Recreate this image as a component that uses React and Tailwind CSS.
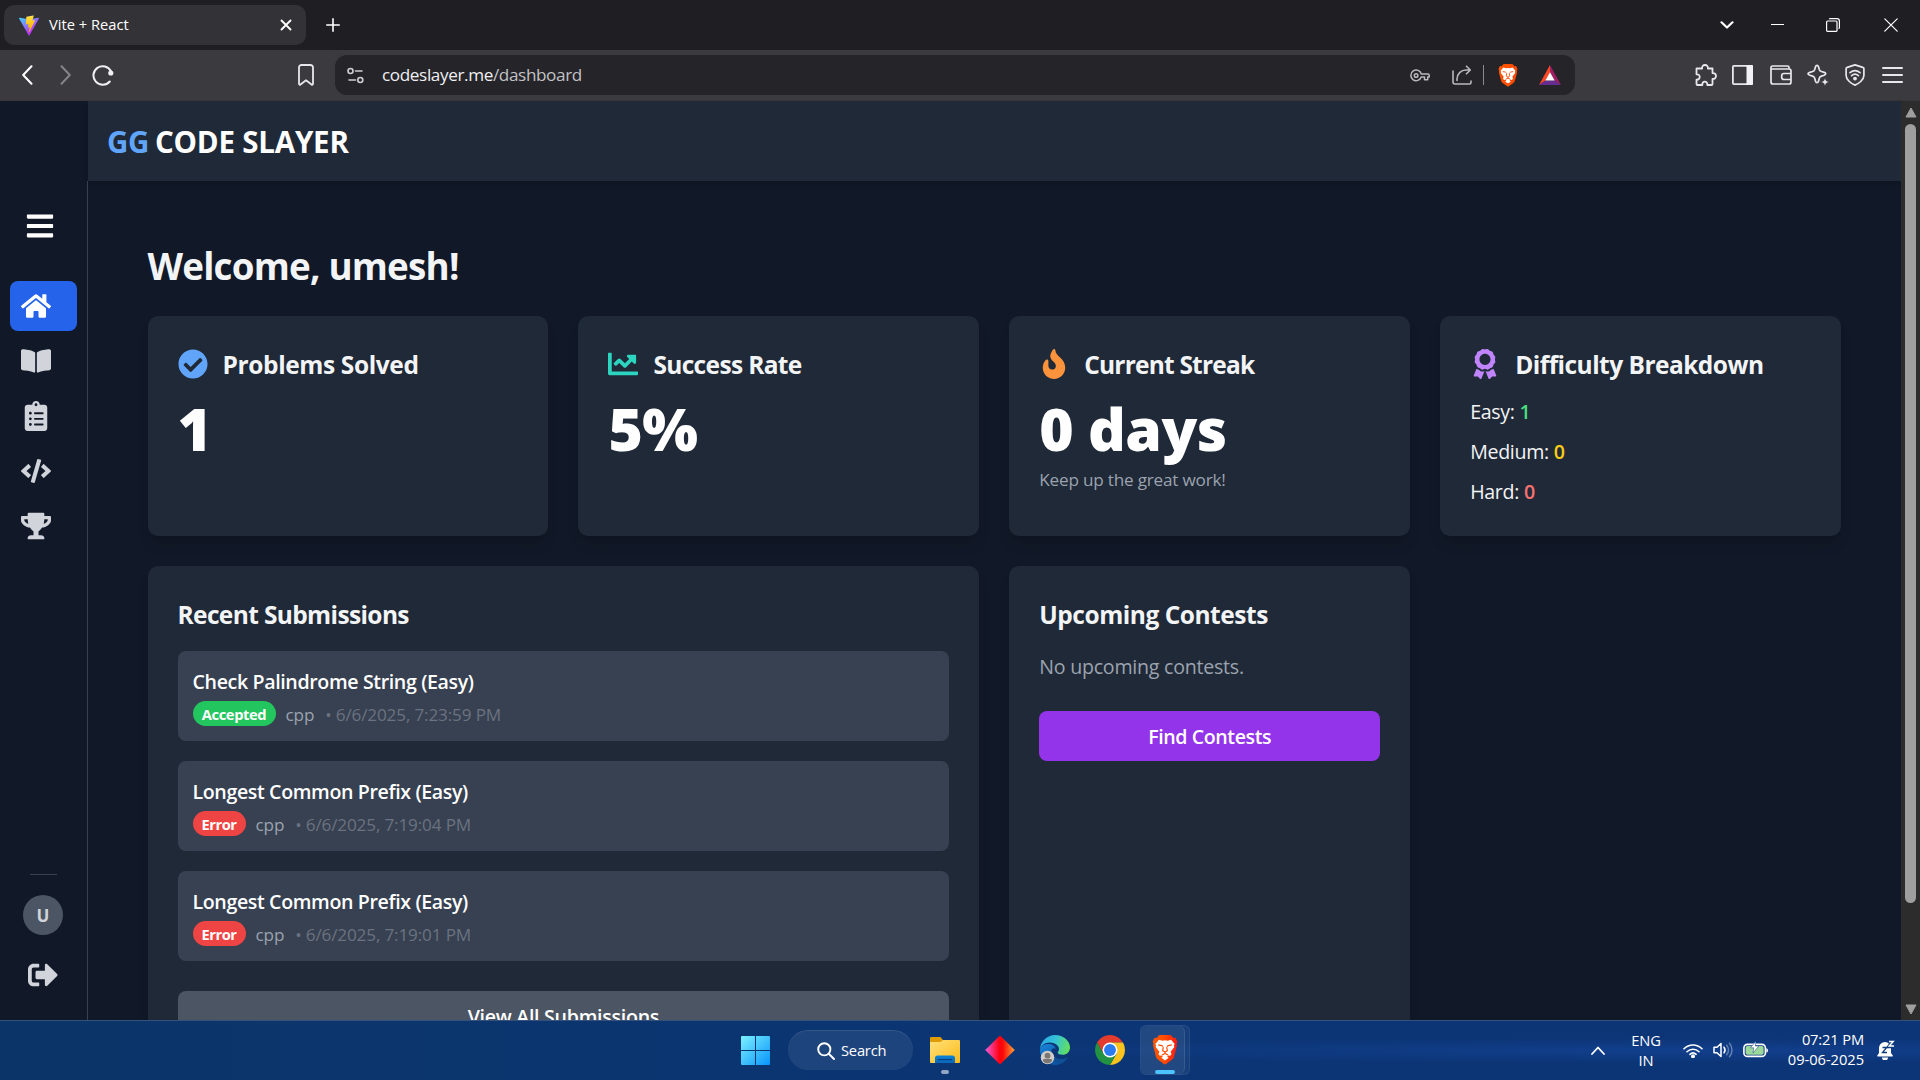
import React from "react";
import {
  FaBars,
  FaHome,
  FaBookOpen,
  FaClipboardList,
  FaCode,
  FaTrophy,
  FaSignOutAlt,
  FaCheckCircle,
  FaChartLine,
  FaFire,
  FaAward,
} from "react-icons/fa";

/* ---------- logos and browser icons ---------- */

function ViteLogo() {
  return (
    <svg viewBox="0 0 256 257" className="h-[21px] w-5">
      <defs>
        <linearGradient id="viteA" x1="0" x2="0.6" y1="0.05" y2="0.8">
          <stop offset="0" stopColor="#41d1ff" />
          <stop offset="1" stopColor="#bd34fe" />
        </linearGradient>
        <linearGradient id="viteB" x1="0.43" x2="0.5" y1="0.02" y2="0.9">
          <stop offset="0" stopColor="#ffea83" />
          <stop offset="0.1" stopColor="#ffdd35" />
          <stop offset="1" stopColor="#ffa800" />
        </linearGradient>
      </defs>
      <path fill="url(#viteA)" d="M255.153 37.938 134.897 252.976c-2.483 4.44-8.862 4.466-11.382.048L.875 37.958c-2.746-4.814 1.371-10.646 6.827-9.67l120.385 21.517a6.537 6.537 0 0 0 2.322-.004l117.867-21.483c5.438-.991 9.574 4.796 6.877 9.62Z" />
      <path fill="url(#viteB)" d="M185.432.063 96.44 17.501a3.268 3.268 0 0 0-2.634 3.014l-5.474 92.456a3.268 3.268 0 0 0 3.997 3.378l24.777-5.718c2.318-.535 4.413 1.507 3.936 3.838l-7.361 36.047c-.495 2.426 1.782 4.5 4.151 3.78l15.304-4.649c2.372-.72 4.652 1.36 4.15 3.788l-11.698 56.621c-.732 3.542 3.979 5.473 5.943 2.437l1.313-2.028 72.516-144.72c1.215-2.423-.88-5.186-3.54-4.672l-25.505 4.922c-2.396.462-4.435-1.77-3.759-4.114l16.646-57.705c.677-2.35-1.37-4.583-3.769-4.113Z" />
    </svg>
  );
}

function BraveLogo({ className, id }) {
  return (
    <svg viewBox="0 0 20 23" className={className}>
      <defs>
        <linearGradient id={id} x1="0" x2="1" y1="0" y2="0">
          <stop offset="0" stopColor="#ff5500" />
          <stop offset="0.4" stopColor="#ff5000" />
          <stop offset="1" stopColor={id === "braveTask" ? "#ff1a10" : "#ff4600"} />
        </linearGradient>
      </defs>
      <path fill={`url(#${id})`} d="M5.6 0h8.8l2.1 2.2 1.6-.2 1.4 3-.6 1.9.3 1-2.2 8.6c-.3 1.2-1 2-2 2.7l-4.2 3c-.5.4-1.1.4-1.6 0l-4.2-3c-1-.7-1.7-1.5-2-2.7L.8 7.9l.3-1L.5 5l1.4-3 1.6.2z" />
      <path fill="#fff" d="M5.3 3.6 8 4.3 10 4l2 .3 2.7-.7 2.7 3.2-.6 1.2.4 1.1-2.9 3.7.7 1.7-1 1.5-1.7-.3-.6.8 1.1 1L10 19.500l-2.800-2 1.100-1-.6-.8-1.700.3-1-1.500.7-1.700L2.800 9.100 3.200 8l-.6-1.200z" />
      <path fill="none" stroke="#ff4a00" strokeWidth=".9" strokeLinejoin="round" d="M4.800 7.600l2.700.5 1 .8M15.200 7.600l-2.700.5-1 .8M8.700 9.300l-.5 2.700 1.800 1.100 1.800-1.100-.5-2.700M10 13.100v1.200M7.600 15.300 10 14.200l2.400 1.100" />
    </svg>
  );
}

function BatLogo() {
  return (
    <svg viewBox="0 0 22 20" className="h-5 w-[22px]">
      <path fill="#ff4724" d="M11 0v7.500L6.500 15.500 0 20z" />
      <path fill="#9e1f63" d="M11 0l11 20-6.500-4.500L11 7.500z" />
      <path fill="#662d91" d="M0 20l6.500-4.500h9L22 20z" />
      <path fill="#fff" d="M11 7.300l4.700 8.300H6.300z" />
    </svg>
  );
}

function Line({ box = "0 0 24 24", className, sw = 2, children }) {
  return (
    <svg viewBox={box} className={className} fill="none" stroke="currentColor" strokeWidth={sw} strokeLinecap="round" strokeLinejoin="round">
      {children}
    </svg>
  );
}

function TabStrip() {
  return (
    <div className="flex h-[50px] items-start bg-[#1f1e23] pl-1 pt-[5px] text-white">
      <div className="flex h-[40px] w-[302px] items-center rounded-[10px] bg-[#333236] pl-[15px] pr-[14px]">
        <ViteLogo />
        <span className="ml-[10px] flex-1 pb-0.5 text-[14.7px] leading-5">Vite + React</span>
        <Line box="0 0 12 12" className="size-3" sw={1.9}>
          <path d="M1.5 1.5l9 9M10.5 1.5l-9 9" />
        </Line>
      </div>
      <Line box="0 0 14 14" className="ml-5 mt-[13px] size-[14px]" sw={1.6}>
        <path d="M7 .8v12.4M.8 7h12.4" />
      </Line>
      <div className="ml-auto flex h-10 items-center pr-[22px]">
        <Line box="0 0 14 8" className="mr-[37px] h-2 w-[14px]" sw={2.2}>
          <path d="M1.5 1.3L7 6.500l5.500-5.200" />
        </Line>
        <div className="mb-px mr-[42px] h-px w-[13px] bg-white" />
        <svg viewBox="0 0 14 14" className="mr-[44px] size-[14px]" fill="none" stroke="#fff" strokeWidth="1.2">
          <rect x=".6" y="3" width="10.4" height="10.4" rx="1" />
          <path d="M3.200 1.200A1.500 1.500 0 0 1 4.500.6H11A2.400 2.400 0 0 1 13.400 3v6.500a1.500 1.500 0 0 1-.8 1.300" />
        </svg>
        <Line box="0 0 14 14" className="size-[14px]" sw={1.2}>
          <path d="M.8.8l12.4 12.4M13.2.8L.8 13.2" />
        </Line>
      </div>
    </div>
  );
}

function Toolbar() {
  return (
    <div className="flex h-[51px] items-center border-b border-[#37353a] bg-[#3b3a3f] text-[#e8e8ea]">
      <div className="flex w-[335px] items-center pl-[22px]">
        <Line box="0 0 11 20" className="h-5 w-[11px] text-white" sw={2}>
          <path d="M9.500 1.200L1.200 10l8.300 8.800" />
        </Line>
        <Line box="0 0 11 20" className="ml-[27px] h-5 w-[11px] text-[#858488]" sw={2}>
          <path d="M1.500 1.200L9.800 10l-8.300 8.800" />
        </Line>
        <svg viewBox="0 0 22 22" className="ml-[21px] size-[22px]">
          <path fill="none" stroke="#f0f0f2" strokeWidth="2" strokeLinecap="round" d="M17.800 17.500A9.300 9.300 0 1 1 19 7.200" />
          <circle cx="18.800" cy="9" r="2.600" fill="#f0f0f2" />
        </svg>
        <Line box="0 0 16 22" className="ml-[184px] h-[22px] w-4" sw={1.8}>
          <path d="M3.500 1h9A2.500 2.500 0 0 1 15 3.500v16.300c0 1-.8 1.300-1.500.7L8 16.300l-5.500 4.200c-.7.6-1.500.3-1.500-.7V3.500A2.500 2.500 0 0 1 3.500 1z" />
        </Line>
      </div>
      <div className="flex h-10 w-[1240px] items-center rounded-xl bg-[#252429] pl-3 pr-[14px]">
        <Line box="0 0 17 17" className="size-[17px] text-[#d0d0d3]" sw={1.6}>
          <circle cx="3.500" cy="4" r="2.500" />
          <path d="M8.500 4H15M2 13h6.500" />
          <circle cx="13.300" cy="13" r="2.500" />
        </Line>
        <span className="ml-[18px] text-[17.15px] leading-6 tracking-[-0.38px] text-[#c2c2c5]">
          <span className="text-[#f0f0f2]">codeslayer.me</span>/dashboard
        </span>
        <Line box="0 0 20 13" className="ml-auto h-[13px] w-5 text-[#b9b9bc]" sw={1.5}>
          <path d="M11.300 5H18a1.200 1.200 0 0 1 1.200 1.200V8h-1.500v2.800h-3.200V8h-3.300a5.300 5.300 0 1 1 .1-3z" />
          <circle cx="6.100" cy="6.500" r="1.800" />
        </Line>
        <Line box="0 0 20 20" className="ml-[22px] size-5 text-[#b9b9bc]" sw={1.6}>
          <path d="M1 6v11a2 2 0 0 0 2 2h14.500a1.500 1.500 0 0 0 1.500-1.500V16M5 15.500V14c0-5 4-9 9-9h4M14.500 1.200L18.300 5l-3.800 3.800" />
        </Line>
        <div className="ml-[11px] h-5 w-px bg-[#8b8a8e]" />
        <BraveLogo id="braveBar" className="ml-[14px] h-[23px] w-5" />
        <div className="ml-[21px]">
          <BatLogo />
        </div>
      </div>
      <div className="ml-auto flex items-center pr-[17px]">
        <Line box="0 0 22 22" className="size-[22px]" sw={1.8}>
          <path d="M1.500 4.500h5.600c-.3-2 .9-3.500 2.900-3.500s3.200 1.500 2.900 3.500h4.600v4.600c2.200-.2 3.500 1.100 3.500 2.900s-1.300 3.100-3.500 2.900V20a1 1 0 0 1-1 1h-4.200c.2-2-.8-3.300-2.500-3.300S7.100 19 7.300 21H2.500a1 1 0 0 1-1-1v-4.300c2 .1 3.200-.9 3.200-2.700S3.500 10.100 1.500 10.300z" />
        </Line>
        <svg viewBox="0 0 21 20" className="ml-[15px] h-5 w-[21px]">
          <rect x=".9" y=".9" width="19.200" height="18.200" rx="1" fill="none" stroke="currentColor" strokeWidth="1.8" />
          <path d="M14.500 0H20a1 1 0 0 1 1 1v18a1 1 0 0 1-1 1h-5.500z" fill="#f2f2f4" />
        </svg>
        <Line box="0 0 22 20" className="ml-[17px] h-5 w-[22px]" sw={1.7}>
          <path d="M19 4V2.500A1.500 1.500 0 0 0 17.500 1H2.800A1.600 1.600 0 0 0 1 2.600V17a2 2 0 0 0 2 2h16a2 2 0 0 0 2-2V6a2 2 0 0 0-2-2H2.500M21 8.500h-7a2.300 2.300 0 0 0-2.300 2.300v1.400a2.300 2.300 0 0 0 2.300 2.300h7" />
        </Line>
        <svg viewBox="0 0 22 22" className="ml-[15px] size-[22px]">
          <path fill="none" stroke="currentColor" strokeWidth="1.7" strokeLinejoin="round" d="M10 1.300c.8 0 1.200.6 1.500 1.500l.8 2.600c.4 1.200.9 1.700 2.100 2.100l2.800.9c1 .3 1.500.7 1.500 1.400s-.5 1.100-1.500 1.400l-2.800.9c-1.200.4-1.700.9-2.100 2.100l-.8 3c-.3.9-.7 1.400-1.500 1.400s-1.200-.5-1.500-1.400l-.8-3c-.4-1.200-.9-1.700-2.100-2.100l-2.800-.9C1.800 10.900 1 10.500 1 9.800s.8-1.100 1.800-1.400l2.800-.9c1.200-.4 1.700-.9 2.100-2.100l.8-2.600c.3-.9.7-1.500 1.500-1.500z" />
          <path fill="currentColor" stroke="#3b3a3f" strokeWidth=".8" d="M18 13.500l1.300 3.200 3.200 1.300-3.200 1.300L18 22.500l-1.300-3.200-3.200-1.300 3.200-1.300z" />
        </svg>
        <Line box="0 0 20 22" className="ml-4 h-[22px] w-5" sw={1.7}>
          <path d="M10 .9l7.800 2.500c.7.2 1.100.7 1.100 1.400v6.700c0 4.500-5.500 8.300-8.900 9.600-3.400-1.300-8.900-5.100-8.900-9.600V4.800c0-.7.4-1.200 1.100-1.400z" />
          <path d="M5 8.600c3-2.500 7-2.500 10 0M6.600 11.600c2-1.700 4.800-1.700 6.800 0" />
          <circle cx="10" cy="14.600" r="1.100" fill="currentColor" />
        </Line>
        <div className="ml-[17px] flex w-[21px] flex-col gap-[5px] text-[#e8e8ea]">
          <div className="h-0.5 rounded bg-current" />
          <div className="h-0.5 rounded bg-current" />
          <div className="h-0.5 rounded bg-current" />
        </div>
      </div>
    </div>
  );
}

/* ---------- page ---------- */

const NAV = [FaHome, FaBookOpen, FaClipboardList, FaCode, FaTrophy];

function Sidebar() {
  return (
    <aside className="flex w-[88px] shrink-0 flex-col pt-20">
      <div className="flex flex-1 flex-col border-r border-[#374151] pt-[30px] text-[#d1d5db]">
        <FaBars className="ml-[25px] size-[30px] text-white" />
        <nav className="mt-10 flex flex-col gap-[5px] px-[10px]">
          {NAV.map((Icon, i) => (
            <a key={i} className={i === 0 ? "flex h-[50px] items-center rounded-lg bg-[#2563eb] pl-[11px] text-white" : "flex h-[50px] items-center pl-[11px]"}>
              <Icon className="size-[30px]" />
            </a>
          ))}
        </nav>
        <div className="mt-auto flex flex-col items-center pb-[30px] pr-px">
          <div className="h-px w-[27px] bg-[#374151]" />
          <div className="mt-5 flex size-10 items-center justify-center rounded-full bg-[#4b5563] pt-0.5 text-[17px] font-bold">U</div>
          <FaSignOutAlt className="mt-[25px] size-[30px]" />
        </div>
      </div>
    </aside>
  );
}

function Card({ className = "", children }) {
  return <section className={`rounded-[10px] bg-[#1f2937] p-[30px] shadow-lg ${className}`}>{children}</section>;
}

function StatTitle({ icon: Icon, color, tracking, children }) {
  return (
    <h2 className={`mb-[15px] flex h-[35px] items-center text-[24.5px] font-bold leading-[35px] text-[#f3f4f6] ${tracking}`}>
      <Icon className={`mr-[15px] size-[30px] ${color}`} />
      <span className="pt-px">{children}</span>
    </h2>
  );
}

function Big({ children }) {
  return <p className="h-[60px] pt-0.5 text-[58.8px] font-extrabold leading-[60px] tracking-[-0.5px] text-white">{children}</p>;
}

const LEVELS = [
  ["Easy:", "1", "text-[#4ade80]"],
  ["Medium:", "0", "text-[#facc15]"],
  ["Hard:", "0", "text-[#f87171]"],
];

const SUBMISSIONS = [
  ["Check Palindrome String (Easy)", "Accepted", "6/6/2025, 7:23:59 PM"],
  ["Longest Common Prefix (Easy)", "Error", "6/6/2025, 7:19:04 PM"],
  ["Longest Common Prefix (Easy)", "Error", "6/6/2025, 7:19:01 PM"],
];

function Submission({ title, status, date }) {
  return (
    <li className="h-[90px] rounded-lg bg-[#374151] p-[15px]">
      <p className="h-[30px] pt-px text-[19.6px] font-semibold leading-[30px] tracking-[-0.37px] text-white">{title}</p>
      <div className="mt-[5px] flex h-[25px] items-center text-[17.15px] tracking-[-0.16px]">
        {status === "Accepted" ? (
          <span className="flex h-[25px] w-[83px] items-center justify-center rounded-full bg-[#22c55e] pt-0.5 text-[14.7px] font-bold tracking-[-0.4px] text-white">{status}</span>
        ) : (
          <span className="flex h-[25px] w-[53px] items-center justify-center rounded-full bg-[#ef4444] pt-0.5 text-[14.7px] font-bold tracking-[-0.5px] text-white">{status}</span>
        )}
        <span className="ml-[10px] pt-[3px] text-[#9ca3af]">cpp</span>
        <span className="ml-[11px] pt-[3px] text-[#6b7280]">• {date}</span>
      </div>
    </li>
  );
}

function Dashboard() {
  return (
    <main className="flex-1 p-[60px] pl-[59.5px]">
      <h1 className="mb-[27px] pt-[3px] text-[36.75px] font-bold leading-[45px] tracking-[-0.78px] text-[#f3f4f6]">Welcome, umesh!</h1>
      <div className="grid grid-cols-4 gap-[30px]">
        <Card>
          <StatTitle icon={FaCheckCircle} color="text-[#60a5fa]" tracking="tracking-[-0.38px]">Problems Solved</StatTitle>
          <Big>1</Big>
        </Card>
        <Card>
          <StatTitle icon={FaChartLine} color="text-[#2dd4bf]" tracking="tracking-[-0.65px]">Success Rate</StatTitle>
          <Big>5%</Big>
        </Card>
        <Card>
          <StatTitle icon={FaFire} color="text-[#fb923c]" tracking="tracking-[-0.8px]">Current Streak</StatTitle>
          <Big>0 days</Big>
          <p className="mt-[10px] pt-px text-[17.15px] leading-[25px] tracking-[-0.2px] text-[#9ca3af]">Keep up the great work!</p>
        </Card>
        <Card>
          <StatTitle icon={FaAward} color="text-[#c084fc]" tracking="tracking-[-0.53px]">Difficulty Breakdown</StatTitle>
          <ul className="flex flex-col gap-[10px] text-[19.6px] leading-[30px] tracking-[-0.3px] text-[#f3f4f6]">
            {LEVELS.map(([label, n, color]) => (
              <li key={label} className="h-[30px] pt-px">
                {label} <span className={`font-semibold ${color}`}>{n}</span>
              </li>
            ))}
          </ul>
        </Card>
        <Card className="col-span-2">
          <h2 className="mb-5 h-[35px] pt-px text-[24.5px] font-bold leading-[35px] tracking-[-0.63px] text-[#f3f4f6]">Recent Submissions</h2>
          <ul className="flex flex-col gap-5">
            {SUBMISSIONS.map(([t, s, d]) => (
              <Submission key={d} title={t} status={s} date={d} />
            ))}
          </ul>
          <button className="mt-[30px] h-[50px] w-full rounded-lg bg-[#4b5563] pt-0.5 text-[19.6px] font-semibold tracking-[-0.28px] text-white">View All Submissions</button>
        </Card>
        <Card>
          <h2 className="mb-5 h-[35px] pt-px text-[24.5px] font-bold leading-[35px] tracking-[-0.47px] text-[#f3f4f6]">Upcoming Contests</h2>
          <p className="mb-[30px] h-[30px] pt-px text-[19.6px] leading-[30px] tracking-[-0.24px] text-[#9ca3af]">No upcoming contests.</p>
          <button className="h-[50px] w-full rounded-lg bg-[#9333ea] pt-px text-[19.6px] font-semibold tracking-[-0.42px] text-white">Find Contests</button>
        </Card>
      </div>
    </main>
  );
}

function Scrollbar() {
  return (
    <div className="flex w-[19px] shrink-0 flex-col items-center bg-[#2c2c2c] pb-[5px] pt-[6px]">
      <svg viewBox="0 0 12 11" className="h-[11px] w-3">
        <path fill="#9f9f9f" stroke="#9f9f9f" strokeWidth="1" strokeLinejoin="round" d="M6 1l5 9H1z" />
      </svg>
      <div className="mt-[6px] h-[779px] w-[11px] rounded-full bg-[#9f9f9f]" />
      <svg viewBox="0 0 12 11" className="mt-auto h-[11px] w-3">
        <path fill="#9f9f9f" stroke="#9f9f9f" strokeWidth="1" strokeLinejoin="round" d="M6 10l5-9H1z" />
      </svg>
    </div>
  );
}

/* ---------- Windows taskbar ---------- */

function StartLogo() {
  return (
    <svg viewBox="0 0 29 29" className="size-[29px]">
      <defs>
        <linearGradient id="win" gradientUnits="userSpaceOnUse" x1="0" y1="0" x2="29" y2="29">
          <stop offset="0" stopColor="#7cf1ff" />
          <stop offset="1" stopColor="#0794fb" />
        </linearGradient>
      </defs>
      <path fill="url(#win)" d="M1 0h13v14H0V1a1 1 0 0 1 1-1zM15 0h13a1 1 0 0 1 1 1v13H15zM0 15h14v14H1a1 1 0 0 1-1-1zM15 15h14v13a1 1 0 0 1-1 1H15z" />
    </svg>
  );
}

function FolderIcon() {
  return (
    <svg viewBox="0 0 30 27" className="h-[27px] w-[30px]">
      <defs>
        <linearGradient id="folder" x1="0" y1="0" x2="1" y2="1">
          <stop offset="0" stopColor="#ffe07a" />
          <stop offset="1" stopColor="#fcbc19" />
        </linearGradient>
        <linearGradient id="folderTab" x1="0" y1="0" x2="0" y2="1">
          <stop offset="0" stopColor="#0a84d8" />
          <stop offset="1" stopColor="#0b66b8" />
        </linearGradient>
      </defs>
      <path fill="#e09c05" d="M1 0h9.500l2.500 3h16v6H0V1a1 1 0 0 1 1-1z" />
      <path fill="url(#folder)" d="M0 5h10.500L13 3h16a1 1 0 0 1 1 1v21a1 1 0 0 1-1 1H1a1 1 0 0 1-1-1z" />
      <path fill="url(#folderTab)" d="M5 26v-5a2.500 2.500 0 0 1 2.500-2.500h15A2.500 2.500 0 0 1 25 21v5z" />
      <rect x="8" y="22" width="14" height="1.200" fill="#063f80" />
    </svg>
  );
}

function DiamondIcon() {
  return (
    <svg viewBox="0 0 30 30" className="size-[30px]">
      <defs>
        <linearGradient id="diamond" x1="0" x2="1" y1="0" y2="0">
          <stop offset="0" stopColor="#f35fe0" />
          <stop offset="0.48" stopColor="#ff0010" />
          <stop offset="0.6" stopColor="#fb0a08" />
          <stop offset="1" stopColor="#ffa53a" />
        </linearGradient>
      </defs>
      <path fill="url(#diamond)" d="M15 .5L29.800 15 15 29.500.2 15z" />
    </svg>
  );
}

function EdgeIcon() {
  return (
    <svg viewBox="0 0 30 30" className="size-[30px]">
      <defs>
        <linearGradient id="edgeA" x1="0" x2="1" y1="0.3" y2="0.5">
          <stop offset="0" stopColor="#2aa6e8" />
          <stop offset="0.5" stopColor="#35c3d6" />
          <stop offset="1" stopColor="#62e05a" />
        </linearGradient>
        <linearGradient id="edgeB" x1="0" x2="0.6" y1="0" y2="1">
          <stop offset="0" stopColor="#1a86dc" />
          <stop offset="1" stopColor="#0c56a4" />
        </linearGradient>
      </defs>
      <path fill="#0f4f95" d="M12 14c-1.500 6 4 10.500 10 10 2.500-.2 4.500-1.200 5.800-2C25.500 27 20.500 30 15 30 8 30 5 24 6 19z" />
      <path fill="url(#edgeB)" d="M0 15C0 11 5 8.500 9.500 9c4 .5 6 3 6 5-1-1.500-4-1-4.500 2-.7 5 3 10.500 8 13.300C9 31.500 0 25.500 0 15z" />
      <path fill="url(#edgeA)" d="M0 14.500C.4 6.500 7 0 15 0c8.500 0 15 6 15 12.500 0 4.500-3.500 7.300-7.300 7.300-3 0-5-1-5-2.300 0-.8 1.300-1.200 1.300-3.500 0-3.500-4-6.500-9-6.500-5.500 0-9.500 3.500-10 7z" />
      <circle cx="7.500" cy="22.500" r="6.800" fill="#cfcbc8" />
      <circle cx="7.500" cy="20.700" r="2.900" fill="#7a7673" />
      <path fill="#7a7673" d="M3 25.300c0-.8.6-1.300 1.300-1.300h6.400c.7 0 1.300.5 1.300 1.300 0 1.700-2 3.100-4.500 3.100S3 27 3 25.300z" />
    </svg>
  );
}

function ChromeIcon() {
  return (
    <svg viewBox="0 0 48 48" className="size-[30px]">
      <path fill="#e33b2e" d="M24 12h20.780A24 24 0 0 0 3.220 12L13.600 30z" />
      <path fill="#fcc31e" d="M34.390 30L24 48A24 24 0 0 0 44.780 12H24z" />
      <path fill="#229342" d="M13.610 30L3.220 12A24 24 0 0 0 24 48l10.390-18z" />
      <circle cx="24" cy="24" r="12" fill="#fff" />
      <circle cx="24" cy="24" r="9.500" fill="#2a7bf0" />
    </svg>
  );
}

function Taskbar() {
  return (
    <footer className="relative flex h-[60px] border-t border-[#35517c] bg-linear-to-r from-[#0b3568] via-[#0b3574] via-55% to-[#0c3577] text-white">
      <div className="absolute inset-0 bg-radial-[at_88%_50%] from-[#123f8d] to-transparent to-30%" />
      <div className="relative flex w-[1190px] items-center pl-[741px]">
        <StartLogo />
        <div className="-mt-px ml-[18px] flex h-10 w-[125px] items-center rounded-full border-t border-white/10 bg-white/8 pl-[29px]">
          <Line box="0 0 18 18" className="size-[18px]" sw={1.9}>
            <circle cx="7.300" cy="7.300" r="6.100" />
            <path d="M12 12l5 5" />
          </Line>
          <span className="ml-[6px] pb-0.5 text-[14.7px] leading-5 tracking-[-0.2px]">Search</span>
        </div>
        <div className="relative -mt-px ml-[17px]">
          <FolderIcon />
          <div className="absolute left-[11px] top-[33px] h-1 w-2 rounded-full bg-[#93a5c4]" />
        </div>
        <div className="-mt-0.5 ml-[25px]"><DiamondIcon /></div>
        <div className="-mt-px ml-[25px]"><EdgeIcon /></div>
        <div className="-mt-px ml-[25px]"><ChromeIcon /></div>
        <div className="-mt-px ml-[15px] flex h-[50px] w-[50px] shrink-0 rounded-md border border-white/8 bg-white/5">
          <div className="relative flex w-[44px] shrink-0 items-center justify-center rounded-md border-r border-white/10 bg-white/5 pl-[5px]">
            <BraveLogo id="braveTask" className="h-[30px] w-[26px]" />
            <div className="absolute bottom-0 left-[14px] h-1 w-5 rounded-full bg-[#4cc2ff]" />
          </div>
        </div>
      </div>
      <div className="relative ml-auto flex items-center pb-px pr-[25px] text-[14.7px] leading-5">
        <Line box="0 0 14 9" className="h-[9px] w-[14px]" sw={1.8}>
          <path d="M1 8l6-6.500L13 8" />
        </Line>
        <div className="ml-[26px] w-[30px] pb-px text-center tracking-[-0.2px]">
          <p>ENG</p>
          <p>IN</p>
        </div>
        <Line box="0 0 20 15" className="ml-[22px] h-[15px] w-5" sw={1.6}>
          <path d="M1 5.800c5-5.100 13-5.100 18 0M4 8.700c3.400-3.300 8.600-3.300 12 0M6.900 11.300c1.800-1.700 4.400-1.700 6.200 0" />
          <circle cx="10" cy="13.200" r="1.200" fill="currentColor" />
        </Line>
        <Line box="0 0 21 16" className="ml-[10px] h-4 w-[21px]" sw={1.5}>
          <path d="M1 5.300h3L8 1.500v13L4 10.700H1zM11 5.200c1.200 1.600 1.200 4 0 5.600" />
          <path opacity=".35" d="M13.700 3.200c2.300 2.800 2.300 6.800 0 9.600M16.500 1.200c3.300 4 3.300 9.600 0 13.600" />
        </Line>
        <svg viewBox="0 0 25 17" className="mb-px ml-[9px] h-[17px] w-[25px]">
          <rect x=".9" y="3.400" width="21.500" height="12" rx="3.500" fill="none" stroke="#fff" strokeWidth="1.6" />
          <rect x="2.600" y="5" width="18" height="8.800" rx="1.800" fill="#9bd89a" />
          <path fill="#fff" d="M23.300 7.200c1 .3 1.700 1 1.700 2.200s-.7 1.900-1.700 2.200z" />
          <path fill="#fff" stroke="#123f8d" strokeWidth=".5" d="M13 0L7.500 6.800h3.300L10 12l5.800-7h-3.500z" />
        </svg>
        <div className="ml-[19px] mr-px w-[77px] whitespace-nowrap pb-[2px] text-right">
          <p className="tracking-[-0.15px]">07:21 PM</p>
          <p className="tracking-[-0.05px]">09-06-2025</p>
        </div>
        <svg viewBox="0 0 18 20" className="ml-3 h-5 w-[18px]">
          <path fill="#fff" d="M8 2a6 6 0 0 1 6 6v5l1.800 2.400c.3.5 0 1.100-.5 1.100H.8c-.5 0-.8-.6-.5-1.100L2 13V8a6 6 0 0 1 6-6zM5 17.500h6a3 3 0 0 1-6 0z" />
          <path fill="none" stroke="#113d80" strokeWidth="1.3" d="M5.500 7.500h4.200l-4.200 5h4.500" />
          <path fill="none" stroke="#113d80" strokeWidth="3" d="M11.300 1.800h4.200l-4 5h4.500" />
          <path fill="none" stroke="#fff" strokeWidth="1.400" d="M12 1.500h4.200l-4 4.500h4.800" />
        </svg>
      </div>
    </footer>
  );
}

export default function App() {
  return (
    <div className="flex h-[1080px] w-[1920px] flex-col overflow-hidden bg-[#111827] font-['Open_Sans','Noto_Sans',sans-serif]">
      <TabStrip />
      <Toolbar />
      <div className="flex h-[919px] overflow-hidden bg-[#111827]">
        <Sidebar />
        <div className="flex flex-1 flex-col">
          <header className="flex h-20 shrink-0 items-center bg-[#1f2937] pl-[19px] pt-[3px] text-[29.5px] font-bold text-white shadow-md">
            <span className="mr-[6px] tracking-[-0.4px] text-[#60a5fa]">GG</span>
            <span className="tracking-[-0.2px]">CODE SLAYER</span>
          </header>
          <Dashboard />
        </div>
        <Scrollbar />
      </div>
      <Taskbar />
    </div>
  );
}
